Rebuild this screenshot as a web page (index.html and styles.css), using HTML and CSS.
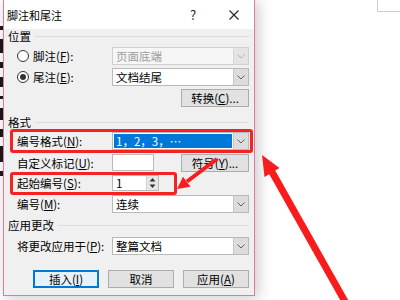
FILE: index.html
```html
<!DOCTYPE html>
<html lang="zh-CN">
<head>
    <meta charset="UTF-8">
    <title>脚注和尾注</title>
    <link rel="stylesheet" href="styles.css">
</head>
<body>
<div class="desk">
    <div class="edge">
        <i style="height:4px"></i><i style="height:14px"></i><i style="height:6px"></i>
        <i style="height:10px"></i><i style="height:3px"></i><i style="height:12px"></i>
        <i style="height:8px"></i><i style="height:16px"></i><i style="height:5px"></i>
    </div>

    <div class="dialog">
        <div class="titlebar">
            <span class="title">脚注和尾注</span>
            <span class="help">?</span>
            <svg class="close" width="10" height="10" viewBox="0 0 10 10">
                <path d="M0.5 0.5 L9.5 9.5 M9.5 0.5 L0.5 9.5" stroke="#222" stroke-width="1.1"/>
            </svg>
        </div>

        <div class="body">
            <div class="group">位置</div>
            <div class="row first">
                <label class="lbl"><span class="radio"></span>脚注(<u>F</u>):</label>
                <div class="combo disabled"><span class="val">页面底端</span><span class="drop"><svg width="8" height="5" viewBox="0 0 8 5"><path d="M0.5 0.5 L4 4 L7.5 0.5" fill="none" stroke="#b4b4b4"/></svg></span></div>
            </div>
            <div class="row">
                <label class="lbl"><span class="radio on"></span>尾注(<u>E</u>):</label>
                <div class="combo"><span class="val">文档结尾</span><span class="drop"><svg width="8" height="5" viewBox="0 0 8 5"><path d="M0.5 0.5 L4 4 L7.5 0.5" fill="none" stroke="#606060"/></svg></span></div>
            </div>
            <div class="row right">
                <button class="btn small">转换(<u>C</u>)...</button>
            </div>

            <div class="group g2">格式</div>
            <div class="row mark-format">
                <label class="lbl">编号格式(<u>N</u>):</label>
                <div class="combo"><span class="val picked">1，2，3，…</span><span class="drop"><svg width="8" height="5" viewBox="0 0 8 5"><path d="M0.5 0.5 L4 4 L7.5 0.5" fill="none" stroke="#606060"/></svg></span></div>
            </div>
            <div class="row custom">
                <label class="lbl">自定义标记(<u>U</u>):</label>
                <div class="field short"></div>
                <button class="btn small push">符号(<u>Y</u>)...</button>
            </div>
            <div class="row mark-start">
                <label class="lbl">起始编号(<u>S</u>):</label>
                <div class="spin">
                    <span class="val">1</span>
                    <span class="arrows">
                        <svg width="11" height="7" viewBox="0 0 11 7"><path d="M2.5 5.5 L5.5 2 L8.5 5.5 Z" fill="#333"/></svg>
                        <svg width="11" height="7" viewBox="0 0 11 7"><path d="M2.5 1.5 L5.5 5 L8.5 1.5 Z" fill="#333"/></svg>
                    </span>
                </div>
            </div>
            <div class="row">
                <label class="lbl">编号(<u>M</u>):</label>
                <div class="combo"><span class="val">连续</span><span class="drop"><svg width="8" height="5" viewBox="0 0 8 5"><path d="M0.5 0.5 L4 4 L7.5 0.5" fill="none" stroke="#606060"/></svg></span></div>
            </div>

            <div class="group g3">应用更改</div>
            <div class="row apply">
                <label class="lbl">将更改应用于(<u>P</u>):</label>
                <div class="combo"><span class="val">整篇文档</span><span class="drop"><svg width="8" height="5" viewBox="0 0 8 5"><path d="M0.5 0.5 L4 4 L7.5 0.5" fill="none" stroke="#606060"/></svg></span></div>
            </div>

            <div class="actions">
                <button class="btn wide focus">插入(<u>I</u>)</button>
                <button class="btn wide">取消</button>
                <button class="btn wide">应用(<u>A</u>)</button>
            </div>
        </div>
    </div>

    <div class="corner"></div>

    <!-- 红色箭头标注 -->
    <svg class="arrows-layer" width="400" height="300" viewBox="0 0 400 300">
        <line x1="217" y1="159" x2="187" y2="181.5" stroke="#f81c1c" stroke-width="4"/>
        <polygon points="177,189 190.5,186.8 183,176.8" fill="#f81c1c"/>
        <line x1="347" y1="305" x2="272" y2="172" stroke="#f81c1c" stroke-width="7"/>
        <polygon points="262,155 279.5,168 264.5,177" fill="#f81c1c"/>
    </svg>
</div>
</body>
</html>
```

FILE: styles.css
```css
* {
    margin: 0;
    padding: 0;
    box-sizing: border-box;
}
body {
    background: #fff;
    font-family: "Noto Sans CJK SC", "Noto Sans", sans-serif;
    font-size: 11.5px;
    color: #000;
}
.desk {
    position: relative;
    width: 400px;
    height: 300px;
    overflow: hidden;
    display: flex;
    align-items: flex-start;
}
.edge {
    width: 3px;
    padding-top: 26px;
    display: flex;
    flex-direction: column;
    gap: 9px;
}
.edge i {
    display: block;
    width: 3px;
    background: #1a1a1a;
}
.dialog {
    width: 252px;
    height: 297px;
    margin-top: -1px;
    border: 1px solid #e2779f;
    background: #f0f0f0;
    box-shadow: 3px 2px 14px rgba(0, 0, 0, 0.22);
}
.titlebar {
    height: 29px;
    background: #fff;
    display: flex;
    align-items: center;
    padding-left: 3px;
}
.title {
    flex: 1;
    font-size: 11px;
}
.help {
    width: 12px;
    text-align: center;
    margin-right: 30px;
    font-size: 13px;
    color: #222;
}
.close {
    margin-right: 15px;
}
.body {
    padding: 0 5px 0 4px;
}
.group {
    height: 14px;
    display: flex;
    align-items: center;
    line-height: 14px;
}
.group::after {
    content: "";
    flex: 1;
    margin-left: 4px;
    border-top: 1px solid #dcdcdc;
}
.g2 {
    margin-top: 8px;
}
.g3 {
    margin-top: 5px;
}
.row {
    position: relative;
    display: flex;
    align-items: center;
    height: 18px;
    margin-top: 3px;
    padding-left: 9px;
}
.row.first {
    margin-top: 4px;
}
.row.right {
    justify-content: flex-end;
}
.row.apply {
    margin-top: 5px;
}
.lbl {
    width: 95px;
    display: flex;
    align-items: center;
    white-space: nowrap;
}
.radio {
    width: 12px;
    height: 12px;
    border: 1px solid #333;
    border-radius: 50%;
    background: #fff;
    margin-right: 4px;
    display: flex;
    align-items: center;
    justify-content: center;
}
.radio.on::after {
    content: "";
    width: 6px;
    height: 6px;
    border-radius: 50%;
    background: #333;
}
.combo {
    flex: 1;
    height: 18px;
    display: flex;
    background: #fff;
    border: 1px solid #b9b9b9;
}
.combo .val {
    flex: 1;
    padding-left: 3px;
    line-height: 16px;
}
.combo .val.picked {
    margin: 1px;
    padding-left: 2px;
    line-height: 14px;
    background: #0078d7;
    color: #fff;
}
.combo .drop {
    width: 15px;
    background: #dcdcdc;
    border-left: 1px solid #c8c8c8;
    display: flex;
    align-items: center;
    justify-content: center;
}
.combo.disabled {
    background: #f6f6f6;
    border-color: #d0d0d0;
    color: #9c9c9c;
}
.combo.disabled .drop {
    background: #e4e4e4;
    border-left-color: #d6d6d6;
}
.btn {
    font: inherit;
    color: #000;
    height: 18px;
    background: #e1e1e1;
    border: 1px solid #adadad;
    line-height: 16px;
}
.btn.small {
    width: 68px;
}
.btn.push {
    margin-left: auto;
}
.row.custom {
    margin-top: 4px;
}
.field {
    background: #fff;
    border: 1px solid #b9b9b9;
    height: 17px;
    align-self: flex-start;
}
.field.short {
    width: 42px;
}
.spin {
    width: 47px;
    height: 16px;
    background: #fff;
    border: 1px solid #b9b9b9;
    display: flex;
}
.spin .val {
    flex: 1;
    padding-left: 3px;
    line-height: 14px;
}
.spin .arrows {
    width: 12px;
    display: flex;
    flex-direction: column;
    background: #e6e6e6;
    border-left: 1px solid #cfcfcf;
}
.spin .arrows svg {
    display: block;
}
.row.mark-start {
    height: 16px;
    margin-top: 3px;
}
.row.mark-start + .row {
    margin-top: 4px;
}
.mark-format::after,
.mark-start::after {
    content: "";
    position: absolute;
    border: 3px solid #f42222;
    border-radius: 3px;
}
.mark-format::after {
    left: 2px;
    right: -4px;
    top: -3px;
    bottom: -3px;
}
.mark-start::after {
    left: 2px;
    width: 161px;
    top: -3px;
    bottom: -4px;
}
.actions {
    display: flex;
    justify-content: flex-end;
    gap: 9px;
    margin-top: 15px;
}
.btn.wide {
    width: 66px;
}
.btn.focus {
    border: 1px solid #0078d7;
    box-shadow: inset 0 0 0 1px #0078d7;
    background: #e5f1fb;
}
.corner {
    position: absolute;
    right: 0;
    top: 0;
    width: 23px;
    height: 12px;
    border-left: 1px solid #cfcfcf;
    border-bottom: 1px solid #cfcfcf;
    background: #fff;
}
.arrows-layer {
    position: absolute;
    left: 0;
    top: 0;
    pointer-events: none;
}
```
